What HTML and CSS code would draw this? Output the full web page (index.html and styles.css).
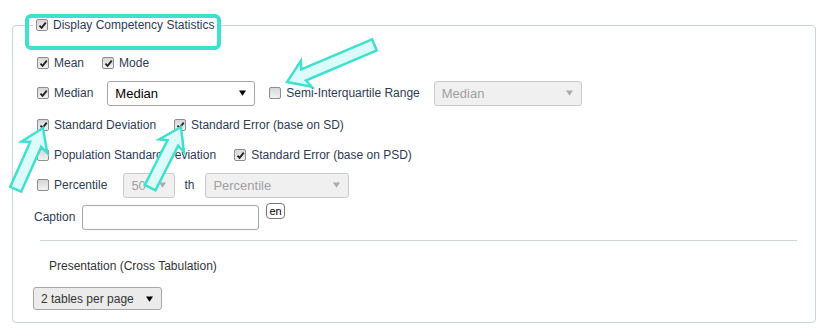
FILE: index.html
```html
<html><head><title>Competency Statistics</title>
<link rel="stylesheet" href="styles.css">
</head>
<body>
    <div class="page">
        <fieldset class="panel">
            <legend class="panel-title">
                <label class="opt"><input type="checkbox" checked>Display Competency Statistics</label>
            </legend>

            <div class="row row-opts">
                <label class="opt"><input type="checkbox" checked>Mean</label>
                <label class="opt"><input type="checkbox" checked>Mode</label>
            </div>

            <div class="row row-median">
                <label class="opt"><input type="checkbox" checked>Median</label>
                <select class="select select-md"><option>Median</option></select>
                <label class="opt"><input type="checkbox">Semi-Interquartile Range</label>
                <select class="select select-md" disabled><option>Median</option></select>
            </div>

            <div class="row row-opts spaced">
                <label class="opt"><input type="checkbox" checked>Standard Deviation</label>
                <label class="opt"><input type="checkbox" checked>Standard Error (base on SD)</label>
            </div>

            <div class="row row-opts">
                <label class="opt"><input type="checkbox">Population Standard Deviation</label>
                <label class="opt"><input type="checkbox" checked>Standard Error (base on PSD)</label>
            </div>

            <div class="row">
                <label class="opt"><input type="checkbox">Percentile</label>
                <select class="select select-xs" disabled><option>50</option></select>
                <span class="suffix">th</span>
                <select class="select select-pc" disabled><option>Percentile</option></select>
            </div>

            <div class="row row-caption spaced">
                <label class="caption-label" for="caption">Caption</label>
                <input type="text" id="caption" class="text-input">
                <button class="lang-btn">en</button>
            </div>

            <hr class="divider">

            <div class="section-label">Presentation (Cross Tabulation)</div>
            <select class="select select-tables"><option>2 tables per page</option></select>
        </fieldset>

        <!-- annotation overlay -->
        <svg class="annotations" width="828" height="331" viewBox="0 0 828 331">
            <rect x="27" y="16" width="192" height="32" rx="4" fill="none" stroke="#40e0d0" stroke-width="4"/>
            <g transform="translate(287,82) rotate(157)">
                <polygon class="arrow" points="0,0 -21,-14 -18,-6 -95,-6 -95,6 -18,6 -21,14"/>
            </g>
            <g transform="translate(43,128) rotate(-66)">
                <polygon class="arrow" points="0,0 -21,-14 -18,-6 -67,-6 -67,6 -18,6 -21,14"/>
            </g>
            <g transform="translate(181,127) rotate(-63)">
                <polygon class="arrow" points="0,0 -21,-14 -18,-6 -68,-6 -68,6 -18,6 -21,14"/>
            </g>
        </svg>
    </div>
</body></html>
```

FILE: styles.css
```css
body {
    margin: 0;
    background: #fff;
    font-family: "Liberation Sans", Arial, sans-serif;
    font-size: 12px;
    color: #2e3b56;
}

.page {
    position: relative;
    width: 828px;
    height: 331px;
    padding-top: 18px;
    box-sizing: border-box;
}

.panel {
    margin: 0 12px;
    padding: 16px 18px 12px 20px;
    border: 1px solid #c6d5df;
    border-radius: 4px;
    min-width: 0;
}

.panel-title {
    padding: 0 4px 0 3px;
    line-height: 14px;
}

.row {
    display: flex;
    align-items: center;
    gap: 16px;
    height: 30px;
    margin-left: 4px;
    white-space: nowrap;
}

.row-opts {
    gap: 18px;
}

.row-median {
    gap: 14px;
}

.spaced {
    margin-top: 2px;
}

.opt {
    display: flex;
    align-items: center;
    line-height: 14px;
}

input[type="checkbox"] {
    -webkit-appearance: none;
    appearance: none;
    width: 12px;
    height: 12px;
    margin: 0 5px 0 0;
    border: 1px solid #8d8d8d;
    border-radius: 2px;
    background: linear-gradient(#d6d6d6, #f2f2f2);
    box-sizing: border-box;
}

input[type="checkbox"]:checked {
    background: url("data:image/svg+xml,%3Csvg xmlns='http://www.w3.org/2000/svg' viewBox='0 0 10 10'%3E%3Cpath d='M1.6 5.2 L4 7.6 L8.6 1.8' fill='none' stroke='%23222' stroke-width='2'/%3E%3C/svg%3E") center / 9px 9px no-repeat, linear-gradient(#d6d6d6, #f2f2f2);
}

.select {
    -webkit-appearance: none;
    appearance: none;
    height: 25px;
    padding: 0 20px 0 7px;
    border: 1px solid #a6a6a6;
    border-radius: 3px;
    font-family: "Liberation Sans", Arial, sans-serif;
    font-size: 13px;
    color: #000;
    background: #fff url("data:image/svg+xml,%3Csvg xmlns='http://www.w3.org/2000/svg' viewBox='0 0 8 6'%3E%3Cpath d='M0 0 H8 L4 6 Z' fill='%23000'/%3E%3C/svg%3E") right 8px center / 7px 6px no-repeat;
}

.select:disabled {
    color: #777;
    border-color: #b4b4b4;
    background: #ebebeb url("data:image/svg+xml,%3Csvg xmlns='http://www.w3.org/2000/svg' viewBox='0 0 8 6'%3E%3Cpath d='M0 0 H8 L4 6 Z' fill='%23888'/%3E%3C/svg%3E") right 8px center / 7px 6px no-repeat;
}

.select-md {
    width: 148px;
}

.select-xs {
    width: 52px;
}

.select-pc {
    width: 144px;
}

.suffix {
    margin: 0 -5px 0 -7px;
}

.row-caption {
    gap: 7px;
    margin-left: 1px;
}

.text-input {
    width: 177px;
    height: 25px;
    box-sizing: border-box;
    border: 1px solid #a6a6a6;
    border-radius: 3px;
    padding: 0 6px;
}

.lang-btn {
    align-self: flex-start;
    margin-top: 1px;
    height: 16px;
    padding: 0 2px;
    border: 1px solid #777;
    border-radius: 4px;
    background: #fff;
    font-family: "Liberation Sans", Arial, sans-serif;
    font-size: 11px;
    line-height: 12px;
    color: #000;
}

.divider {
    border: none;
    border-top: 1px solid #c6d5df;
    margin: 8px 0 0 7px;
}

.section-label {
    margin: 18px 0 0 16px;
    line-height: 14px;
    color: #333;
}

.select-tables {
    display: block;
    width: 129px;
    height: 23px;
    margin-top: 14px;
    padding-left: 7px;
    font-size: 12px;
    color: #333;
    background-color: #ebebeb;
}

.annotations {
    position: absolute;
    top: 0;
    left: 0;
    pointer-events: none;
}

.arrow {
    fill: #dcfcfb;
    stroke: #40e0d0;
    stroke-width: 2.5;
}
```
